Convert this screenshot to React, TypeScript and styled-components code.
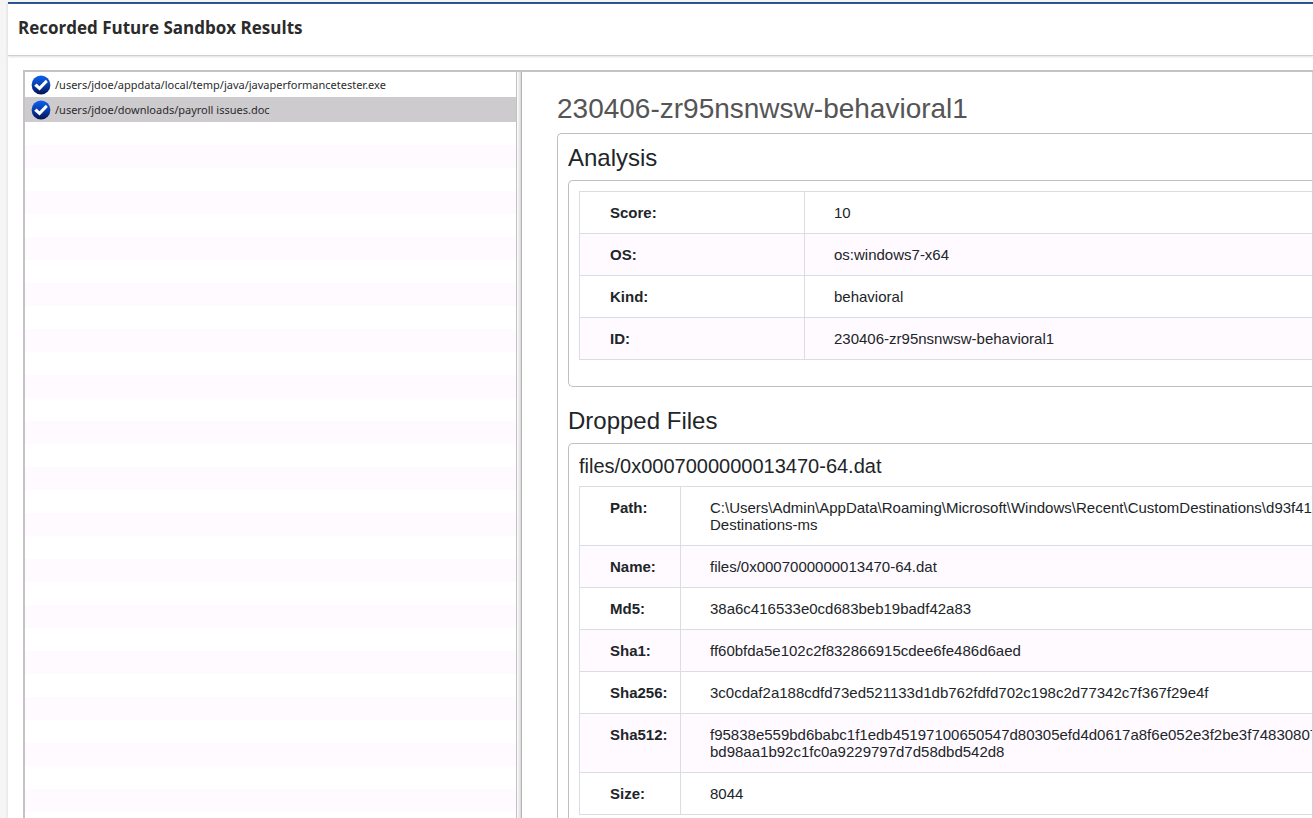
import React from "react";
import styled, { createGlobalStyle } from "styled-components";

const GlobalStyle = createGlobalStyle`
  *, *::before, *::after { box-sizing: border-box; }
  html, body { margin: 0; height: 100%; }
  #root { height: 100%; }
  body { background: #f5f5f5; overflow: hidden; }
`;

const Page = styled.div`
  height: 100%;
  padding: 2px 0 0 8px;
  display: flex;
  flex-direction: column;
  overflow: hidden;
  font-family: "Liberation Sans", Arial, sans-serif;
  color: #212529;
`;

const Window = styled.main`
  flex: 1;
  min-height: 0;
  display: flex;
  flex-direction: column;
  background: #fff;
  border-top: 2px solid #24508f;
  box-shadow: -2px 0 0 #ececec;
`;

const TitleBar = styled.header`
  height: 52px;
  flex: none;
  padding: 10px;
  border-bottom: 1px solid #d0ced0;
  box-shadow: 0 1px 2px #e4dfe2;
`;

const Title = styled.h1`
  margin: 0;
  font: 700 17px/28px "Open Sans", "Noto Sans", sans-serif;
  color: #2b2b2b;
`;

const Split = styled.div`
  flex: 1;
  min-height: 0;
  margin: 14px 0 0 15px;
  display: flex;
  border: 2px solid #c4c2c4;
  border-width: 2px 0 0 2px;
`;

const FilePane = styled.nav`
  flex: 0 0 491px;
  display: flex;
  flex-direction: column;
`;

const FileRow = styled.button<{ $selected?: boolean }>`
  display: flex;
  align-items: center;
  gap: 4px;
  height: 25px;
  flex: none;
  padding: 0 6px;
  border: 0;
  background: ${(p) => (p.$selected ? "#cecbce" : "#fff")};
  font: 11px/20px "Noto Sans", "Open Sans", sans-serif;
  color: #2b2b2b;
  text-align: left;
`;

const EmptyRows = styled.div`
  flex: 1;
  background: repeating-linear-gradient(#fff 0 23px, #fffaff 23px 46px);
`;

const Divider = styled.div`
  flex: 0 0 6px;
  border-left: 1px solid #c0c0c0;
  border-right: 1px solid #b4b4b4;
  background: linear-gradient(90deg, #fff, #d8d8d8);
`;

const Report = styled.section`
  flex: 1;
  min-width: 0;
  padding: 20px 0 0 35px;
  border-right: 1px solid #d2d2d6;
  overflow: hidden;
`;

const ReportTitle = styled.h2`
  margin: 0 0 8px;
  font-size: 28px;
  line-height: 33px;
  font-weight: 400;
  color: #555;
`;

const Panel = styled.div`
  padding: 10px 0 26px 10px;
  border: 1px solid #bfbfbf;
  border-right: 0;
  border-radius: 5px 0 0 5px;
`;

const SectionTitle = styled.h3`
  margin: 0 0 8px;
  font-size: 24px;
  line-height: 28px;
  font-weight: 400;
  * + & { margin-top: 20px; }
`;

const FileTitle = styled.h4`
  margin: 0 0 8px;
  font-size: 20px;
  line-height: 24px;
  font-weight: 400;
`;

const DataTable = styled.table<{ $label: number }>`
  width: 100%;
  table-layout: fixed;
  border-collapse: collapse;
  font-size: 15px;
  line-height: 17px;
  th, td {
    padding: 12px 0 12px 30px;
    border: 1px solid #dadee2;
    text-align: left;
    vertical-align: top;
    white-space: pre;
  }
  th { width: ${(p) => p.$label}px; font-weight: 700; }
  td { padding-left: 29px; border-right: 0; }
  tr:nth-child(even) { background: #fffaff; }
`;

const CheckIcon = () => (
  <svg width="20" height="20" viewBox="0 0 20 20" aria-hidden="true">
    <defs>
      <linearGradient id="disc" x1="0" y1="0" x2="0" y2="1">
        <stop offset="0" stopColor="#0a62f0" />
        <stop offset="0.5" stopColor="#083dae" />
        <stop offset="1" stopColor="#031250" />
      </linearGradient>
    </defs>
    <circle cx="10" cy="10" r="9.4" fill="url(#disc)" />
    <path d="M3.2 10.8 L5.6 8.6 L8.4 11.2 L14.8 4.8 L16.8 7 L8.6 15.4 Z" fill="#fff" />
  </svg>
);

type Row = [label: string, value: string];

const analysis: Row[] = [
  ["Score:", "10"],
  ["OS:", "os:windows7-x64"],
  ["Kind:", "behavioral"],
  ["ID:", "230406-zr95nsnwsw-behavioral1"],
];

const dropped: Row[] = [
  ["Path:", "C:\\Users\\Admin\\AppData\\Roaming\\Microsoft\\Windows\\Recent\\CustomDestinations\\d93f41\nDestinations-ms"],
  ["Name:", "files/0x0007000000013470-64.dat"],
  ["Md5:", "38a6c416533e0cd683beb19badf42a83"],
  ["Sha1:", "ff60bfda5e102c2f832866915cdee6fe486d6aed"],
  ["Sha256:", "3c0cdaf2a188cdfd73ed521133d1db762fdfd702c198c2d77342c7f367f29e4f"],
  ["Sha512:", "f95838e559bd6babc1f1edb45197100650547d80305efd4d0617a8f6e052e3f2be3f74830807\nbd98aa1b92c1fc0a9229797d7d58dbd542d8"],
  ["Size:", "8044"],
];

const Details = ({ rows, label }: { rows: Row[]; label: number }) => (
  <DataTable $label={label}>
    <tbody>
      {rows.map(([name, value]) => (
        <tr key={name}>
          <th scope="row">{name}</th>
          <td>{value}</td>
        </tr>
      ))}
    </tbody>
  </DataTable>
);

export default function App() {
  return (
    <Page>
      <GlobalStyle />
      <Window>
        <TitleBar>
          <Title>Recorded Future Sandbox Results</Title>
        </TitleBar>
        <Split>
          <FilePane aria-label="Files">
            <FileRow type="button">
              <CheckIcon />
              /users/jdoe/appdata/local/temp/java/javaperformancetester.exe
            </FileRow>
            <FileRow type="button" $selected>
              <CheckIcon />
              /users/jdoe/downloads/payroll issues.doc
            </FileRow>
            <EmptyRows />
          </FilePane>
          <Divider />
          <Report>
            <ReportTitle>230406-zr95nsnwsw-behavioral1</ReportTitle>
            <Panel>
              <SectionTitle>Analysis</SectionTitle>
              <Panel>
                <Details rows={analysis} label={225} />
              </Panel>
              <SectionTitle>Dropped Files</SectionTitle>
              <Panel>
                <FileTitle>files/0x0007000000013470-64.dat</FileTitle>
                <Details rows={dropped} label={101} />
              </Panel>
            </Panel>
          </Report>
        </Split>
      </Window>
    </Page>
  );
}
